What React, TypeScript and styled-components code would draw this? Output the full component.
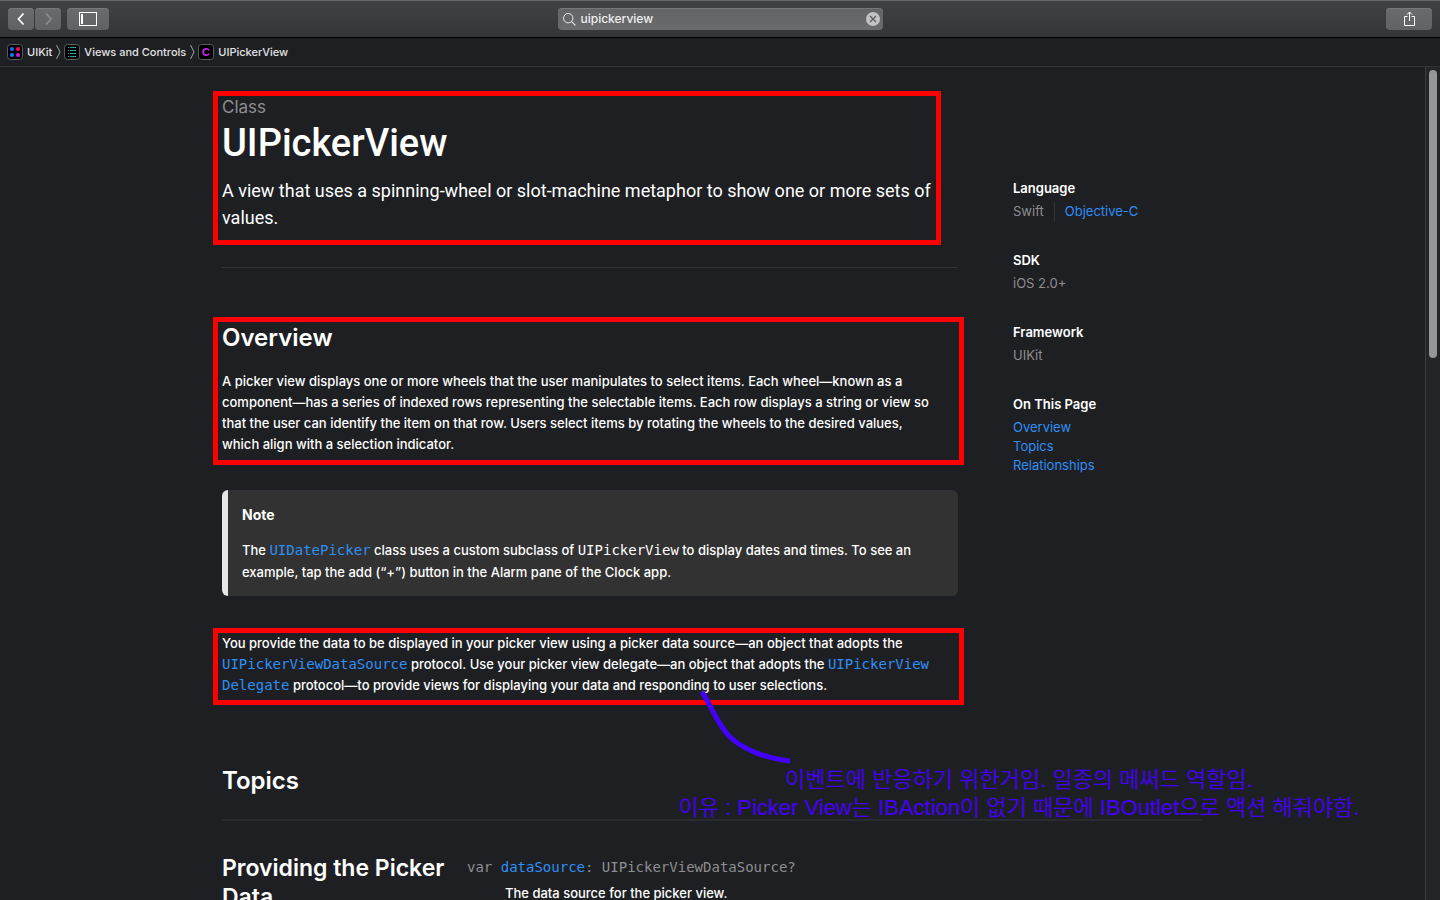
import React from 'react';
import styled, { createGlobalStyle } from 'styled-components';

const color = {
  page: '#1e1f23',
  text: '#ffffff',
  dim: '#8e8e90',
  link: '#2f8ff6',
  rule: '#323336',
  mark: '#ff0000',
  ink: '#4400ff',
};
const sans = `Inter, "Liberation Sans", sans-serif`;
const display = `Roboto, "Liberation Sans", sans-serif`;
const mono = `"DejaVu Sans Mono", "Liberation Mono", monospace`;

const GlobalStyle = createGlobalStyle`
  *, *::before, *::after { box-sizing: border-box; }
  html, body, #root { height: 100%; }
  body {
    margin: 0;
    background: ${color.page};
    color: ${color.text};
    font-family: ${sans};
    font-size: 13px;
    overflow: hidden;
  }
  h1, h2, h3, p, ul, ol, dl, dd { margin: 0; padding: 0; }
  ul, ol { list-style: none; }
  svg { display: block; }
`;

const Window = styled.div`
  height: 100%;
  display: flex;
  flex-direction: column;
`;

const Toolbar = styled.header`
  flex: none;
  height: 38px;
  padding: 0 8px;
  display: grid;
  grid-template-columns: 1fr minmax(160px, 325px) 1fr;
  align-items: center;
  background: linear-gradient(#414244, #343537);
  border-top: 1px solid #67696a;
  border-bottom: 1px solid #000;
`;

const ToolGroup = styled.div<{ $end?: boolean }>`
  display: flex;
  gap: 1px;
  justify-content: ${p => (p.$end ? 'flex-end' : 'flex-start')};
`;

const ToolButton = styled.button<{ $width: number; $apart?: boolean }>`
  width: ${p => p.$width}px;
  height: 22px;
  margin-left: ${p => (p.$apart ? 5 : 0)}px;
  padding: 0;
  display: grid;
  place-items: center;
  border: 0;
  border-radius: 4px;
  background: linear-gradient(#6a6b6d, #616264);
  box-shadow: inset 0 1px 0 #77787a;
  color: #fff;
  &:disabled { color: #8c8d8f; }
`;

const SearchField = styled.label`
  height: 22px;
  padding: 0 3px 0 5px;
  display: flex;
  align-items: center;
  gap: 5px;
  border-radius: 4px;
  background: linear-gradient(#636466, #6a6b6d);
  box-shadow: inset 0 1px 0 #77787a;
`;

const SearchInput = styled.input`
  flex: 1;
  min-width: 0;
  padding: 0;
  border: 0;
  outline: 0;
  background: none;
  color: #f0f0f0;
  font: 500 12px/20px ${sans};
`;

const ClearButton = styled.button`
  padding: 0;
  border: 0;
  background: none;
`;

const PathBar = styled.nav`
  flex: none;
  height: 29px;
  padding-left: 7px;
  border-bottom: 1px solid ${color.rule};
`;

const Crumbs = styled.ol`
  height: 28px;
  display: flex;
  align-items: center;
  gap: 2px;
`;

const Crumb = styled.li`
  display: flex;
  align-items: center;
  gap: 3px;
`;

const CrumbLink = styled.a`
  display: flex;
  align-items: center;
  gap: 4px;
  color: #e3e3e4;
  font-size: 11px;
  font-weight: 500;
  line-height: 16px;
  text-decoration: none;
`;

const Viewport = styled.div`
  flex: 1;
  min-height: 0;
  display: flex;
`;

const Scroller = styled.div`
  flex: 1;
  min-width: 0;
  overflow: hidden;
`;

const ScrollTrack = styled.div`
  flex: none;
  width: 15px;
  padding: 3px 2px 0 3px;
  border-left: 1px solid #3b3c3e;
  background: #242528;
`;

const ScrollThumb = styled.div`
  width: 8px;
  height: 288px;
  border-radius: 4px;
  background: #969697;
`;

const Page = styled.div`
  max-width: 981px;
  margin: 0 auto;
  position: relative;
`;

const Columns = styled.div`
  display: flex;
`;

const Article = styled.main`
  flex: 1;
  min-width: 0;
  padding-top: 24px;
`;

const Aside = styled.aside`
  flex: none;
  width: 245px;
  padding: 112px 0 0 55px;
`;

const Marked = styled.section`
  position: relative;
`;

const Intro = styled(Marked)`
  padding: 4px 0 14px;
`;

const Overview = styled(Marked)`
  margin-top: 49px;
  padding: 5px 0 10px;
`;

const DataSource = styled(Marked)`
  padding: 5px 0 9px;
`;

const MarkBox = styled.div<{ $right: number }>`
  position: absolute;
  top: 0;
  bottom: 0;
  left: -9px;
  right: ${p => p.$right}px;
  border: 5px solid ${color.mark};
  pointer-events: none;
`;

const Eyebrow = styled.p`
  color: ${color.dim};
  font-size: 17px;
  line-height: 24px;
`;

const Title = styled.h1`
  margin-top: 2px;
  font-family: ${display};
  font-size: 38px;
  font-weight: 500;
  line-height: 44px;
`;

const Abstract = styled.p`
  margin-top: 12px;
  font-family: ${display};
  font-size: 18px;
  line-height: 27px;
`;

const Line = styled.span`
  display: block;
  white-space: nowrap;
`;

const Rule = styled.hr<{ $thick?: boolean }>`
  height: ${p => (p.$thick ? 2 : 1)}px;
  margin: 22px 0 0;
  border: 0;
  background: ${p => (p.$thick ? '#2a2b2e' : color.rule)};
`;

const Heading = styled.h2`
  font-size: 24px;
  font-weight: 600;
  line-height: 32px;
`;

const Body = styled.p`
  font-weight: 500;
  line-height: 21px;
  ${Heading} + & { margin-top: 17px; }
`;

const Note = styled.aside`
  margin: 25px 0 32px;
  padding: 14px 16px 13px 14px;
  border-left: 6px solid #e6e6e6;
  border-radius: 6px;
  background: #323232;
  ${Body} { line-height: 22px; }
`;

const NoteTitle = styled.p`
  margin-bottom: 13px;
  font-size: 14px;
  font-weight: 700;
  line-height: 22px;
`;

const Code = styled.code`
  font-family: ${mono};
  font-size: 14px;
  font-weight: 400;
  line-height: 16px;
`;

const TextLink = styled.a`
  color: ${color.link};
  text-decoration: none;
`;

const Facts = styled.dl`
  line-height: 19px;
`;

const FactTitle = styled.dt`
  margin-bottom: 4px;
  font-weight: 600;
`;

const Fact = styled.dd`
  color: ${color.dim};
  &:not(:last-child) { margin-bottom: 30px; }
`;

const Choices = styled.span`
  display: flex;
`;

const Choice = styled.span`
  margin-right: 10px;
  padding-right: 10px;
  border-right: 1px solid ${color.rule};
`;

const Topics = styled.section`
  padding-top: 60px;
`;

const TopicRow = styled.div`
  display: flex;
  padding-top: 31px;
`;

const TopicTitle = styled.h3`
  flex: none;
  width: 245px;
  padding-top: 2px;
  font-size: 23px;
  font-weight: 600;
  line-height: 29px;
`;

const Declaration = styled.p`
  color: ${color.dim};
  line-height: 30px;
`;

const Summary = styled.p`
  padding-left: 38px;
  font-weight: 500;
  line-height: 22px;
`;

const Comment = styled.div`
  position: absolute;
  top: 699px;
  left: 451px;
  width: 692px;
  color: ${color.ink};
  font: 350 22px/28px "Liberation Sans", "Noto Sans CJK KR", sans-serif;
  text-align: center;
`;

const Pointer = styled.svg`
  position: absolute;
  top: 622px;
  left: 476px;
`;

const Frame = () => <rect x="0.5" y="0.5" width="15" height="15" rx="3" fill="#000" stroke="#5b5c5e" />;

const FrameworkIcon = () => (
  <svg width="16" height="16" aria-hidden="true">
    <Frame />
    <circle cx="5" cy="5" r="2" fill="#1e6cff" />
    <circle cx="11" cy="5" r="2" fill="#ff0a55" />
    <circle cx="5" cy="11" r="2" fill="#0a84ff" />
    <circle cx="11" cy="11" r="2" fill="#c81ee6" />
  </svg>
);

const ListIcon = () => (
  <svg width="16" height="16" aria-hidden="true">
    <Frame />
    <path d="M4 3.5h1M4 6.5h1M4 9.5h1M4 12.5h1M6 3.5h6M6 6.5h6M6 9.5h6M6 12.5h6" stroke="#2ba5a5" />
  </svg>
);

const ClassIcon = () => (
  <svg width="16" height="16" aria-hidden="true">
    <Frame />
    <path d="M11 6.4A3.2 3.2 0 1 0 11 9.6" fill="none" stroke="#c71ee8" strokeWidth="1.8" />
  </svg>
);

const Separator = () => (
  <svg width="7" height="16" aria-hidden="true">
    <path d="M1.5 1L5 8L1.5 15" fill="none" stroke="#a5a5a7" />
  </svg>
);

const crumbs = [
  { name: 'UIKit', icon: <FrameworkIcon /> },
  { name: 'Views and Controls', icon: <ListIcon /> },
  { name: 'UIPickerView', icon: <ClassIcon /> },
];

const CodeLink = ({ children }: { children: React.ReactNode }) => (
  <TextLink href="#reference"><Code>{children}</Code></TextLink>
);

export default function App() {
  return (
    <Window>
      <GlobalStyle />
      <Toolbar>
        <ToolGroup>
          <ToolButton $width={26} aria-label="Back">
            <svg width="12" height="14"><path d="M8.5 1.5L3.5 7L8.5 12.5" fill="none" stroke="currentColor" strokeWidth="1.7" /></svg>
          </ToolButton>
          <ToolButton $width={26} aria-label="Forward" disabled>
            <svg width="12" height="14"><path d="M4 1.5L9 7L4 12.5" fill="none" stroke="currentColor" strokeWidth="1.7" /></svg>
          </ToolButton>
          <ToolButton $width={42} $apart aria-label="Toggle sidebar">
            <svg width="18" height="14">
              <rect x="0.5" y="0.5" width="17" height="13" fill="none" stroke="currentColor" />
              <path d="M3 2v10" stroke="currentColor" strokeWidth="2" />
            </svg>
          </ToolButton>
        </ToolGroup>
        <SearchField>
          <svg width="13" height="13" aria-hidden="true">
            <circle cx="5.2" cy="5.2" r="4.7" fill="none" stroke="#e8e8e8" />
            <path d="M8.6 8.6L12.4 12.4" stroke="#e8e8e8" strokeWidth="1.2" />
          </svg>
          <SearchInput aria-label="Search documentation" defaultValue="uipickerview" />
          <ClearButton aria-label="Clear search">
            <svg width="14" height="14">
              <circle cx="7" cy="7" r="7" fill="#c3c3c4" />
              <path d="M4 4L10 10M10 4L4 10" stroke="#5d5e60" strokeWidth="1.4" />
            </svg>
          </ClearButton>
        </SearchField>
        <ToolGroup $end>
          <ToolButton $width={46} aria-label="Share">
            <svg width="11" height="16">
              <path d="M3.5 5.5H0.5V14.5H10.5V5.5H7.5M5.5 10V1M3 3.5L5.5 1L8 3.5" fill="none" stroke="currentColor" />
            </svg>
          </ToolButton>
        </ToolGroup>
      </Toolbar>

      <PathBar aria-label="Path">
        <Crumbs>
          {crumbs.map((crumb, i) => (
            <Crumb key={crumb.name}>
              <CrumbLink href="#path">{crumb.icon}{crumb.name}</CrumbLink>
              {i < crumbs.length - 1 && <Separator />}
            </Crumb>
          ))}
        </Crumbs>
      </PathBar>

      <Viewport>
        <Scroller>
          <Page>
            <Columns>
              <Article>
                <Intro>
                  <Eyebrow>Class</Eyebrow>
                  <Title>UIPickerView</Title>
                  <Abstract>
                    <Line>A view that uses a spinning-wheel or slot-machine metaphor to show one or more sets of</Line>
                    <Line>values.</Line>
                  </Abstract>
                  <MarkBox $right={17} />
                </Intro>
                <Rule />
                <Overview id="overview">
                  <Heading>Overview</Heading>
                  <Body>
                    <Line>A picker view displays one or more wheels that the user manipulates to select items. Each wheel—known as a</Line>
                    <Line>component—has a series of indexed rows representing the selectable items. Each row displays a string or view so</Line>
                    <Line>that the user can identify the item on that row. Users select items by rotating the wheels to the desired values,</Line>
                    <Line>which align with a selection indicator.</Line>
                  </Body>
                  <MarkBox $right={-6} />
                </Overview>
                <Note>
                  <NoteTitle>Note</NoteTitle>
                  <Body>
                    <Line>The <CodeLink>UIDatePicker</CodeLink> class uses a custom subclass of <Code>UIPickerView</Code> to display dates and times. To see an</Line>
                    <Line>example, tap the add (“+”) button in the Alarm pane of the Clock app.</Line>
                  </Body>
                </Note>
                <DataSource>
                  <Body>
                    <Line>You provide the data to be displayed in your picker view using a picker data source—an object that adopts the</Line>
                    <Line><CodeLink>UIPickerViewDataSource</CodeLink> protocol. Use your picker view delegate—an object that adopts the <CodeLink>UIPickerView</CodeLink></Line>
                    <Line><CodeLink>Delegate</CodeLink> protocol—to provide views for displaying your data and responding to user selections.</Line>
                  </Body>
                  <MarkBox $right={-6} />
                </DataSource>
              </Article>
              <Aside>
                <Facts>
                  <FactTitle>Language</FactTitle>
                  <Fact><Choices><Choice>Swift</Choice><TextLink href="#objc">Objective-C</TextLink></Choices></Fact>
                  <FactTitle>SDK</FactTitle>
                  <Fact>iOS 2.0+</Fact>
                  <FactTitle>Framework</FactTitle>
                  <Fact>UIKit</Fact>
                  <FactTitle>On This Page</FactTitle>
                  <Fact>
                    <ul>
                      <li><TextLink href="#overview">Overview</TextLink></li>
                      <li><TextLink href="#topics">Topics</TextLink></li>
                      <li><TextLink href="#relationships">Relationships</TextLink></li>
                    </ul>
                  </Fact>
                </Facts>
              </Aside>
            </Columns>
            <Topics id="topics">
              <Heading>Topics</Heading>
              <Rule $thick />
              <TopicRow>
                <TopicTitle>Providing the Picker Data</TopicTitle>
                <div>
                  <Declaration><Code>var <TextLink href="#datasource">dataSource</TextLink>: UIPickerViewDataSource?</Code></Declaration>
                  <Summary>The data source for the picker view.</Summary>
                </div>
              </TopicRow>
            </Topics>
            <Pointer width="96" height="76" aria-hidden="true">
              <path d="M4 3C14 17 18 34 32 48C46 61 70 70 92 72" fill="none" stroke={color.ink} strokeWidth="5" />
            </Pointer>
            <Comment>
              <Line>이벤트에 반응하기 위한거임. 일종의 메써드 역할임.</Line>
              <Line>이유 : Picker View는 IBAction이 없기 때문에 IBOutlet으로 액션 해줘야함.</Line>
            </Comment>
          </Page>
        </Scroller>
        <ScrollTrack><ScrollThumb /></ScrollTrack>
      </Viewport>
    </Window>
  );
}
